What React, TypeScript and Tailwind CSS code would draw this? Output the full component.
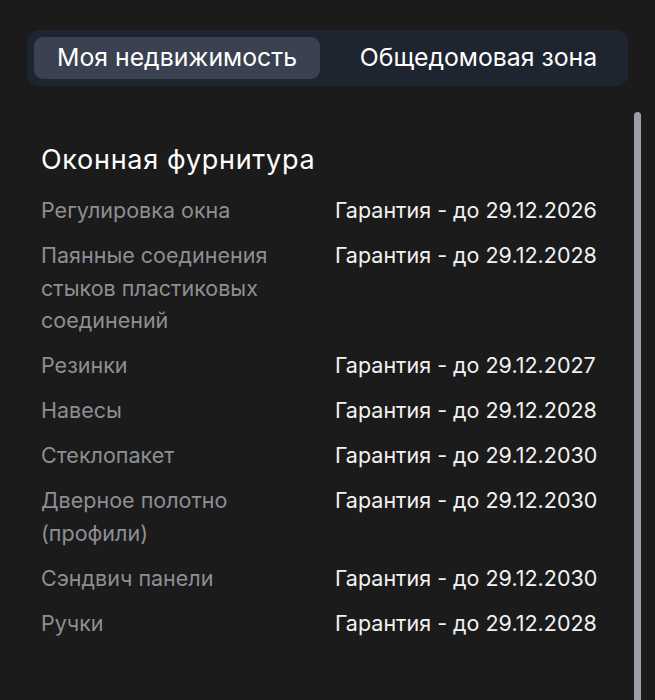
import React, { useState } from "react";

const items = [
  { name: "Регулировка окна", until: "29.12.2026" },
  { name: "Паянные соединения стыков пластиковых соединений", until: "29.12.2028" },
  { name: "Резинки", until: "29.12.2027" },
  { name: "Навесы", until: "29.12.2028" },
  { name: "Стеклопакет", until: "29.12.2030" },
  { name: "Дверное полотно (профили)", until: "29.12.2030" },
  { name: "Сэндвич панели", until: "29.12.2030" },
  { name: "Ручки", until: "29.12.2028" },
];

const tabs = ["Моя недвижимость", "Общедомовая зона"];

export default function App() {
  const [tab, setTab] = useState(0);

  return (
    <div
      className="h-[700px] w-full overflow-hidden bg-[#1b1b1b] text-white"
      style={{ fontFamily: "Inter, 'Noto Sans', sans-serif" }}
    >
      <div className="px-[27px] pt-[30px]">
        <div className="flex rounded-[12px] bg-[#1f2530] p-[7px]">
          {tabs.map((t, i) => (
            <button
              key={t}
              onClick={() => setTab(i)}
              className={
                i === tab
                  ? "flex h-[42px] w-[286px] items-center justify-center rounded-[9px] bg-[#3a4150] text-[24.8px] text-white"
                  : "flex h-[42px] flex-1 items-center justify-center rounded-[9px] pl-[16px] text-[24.8px] text-white"
              }
            >
              {t}
            </button>
          ))}
        </div>
      </div>

      <div className="flex">
        <div className="flex-1 pl-[41px] pt-[57px]">
          <h2 className="text-[27px] font-normal leading-[34px] tracking-[0.7px] text-white">
            Оконная фурнитура
          </h2>
          <div className="mt-[17px] flex flex-col gap-[12.5px]">
            {items.map((it) => (
              <div key={it.name} className="flex text-[21.5px] leading-[32.5px]">
                <div className="w-[294px] pr-[14px] text-[#8e8e93]">{it.name}</div>
                <div className="text-[#f2f2f2]">Гарантия - до {it.until}</div>
              </div>
            ))}
          </div>
        </div>
        <div className="mr-[14px] mt-[26px] h-[600px] w-[7px] rounded-full bg-[#9b9da9]" />
      </div>
    </div>
  );
}
